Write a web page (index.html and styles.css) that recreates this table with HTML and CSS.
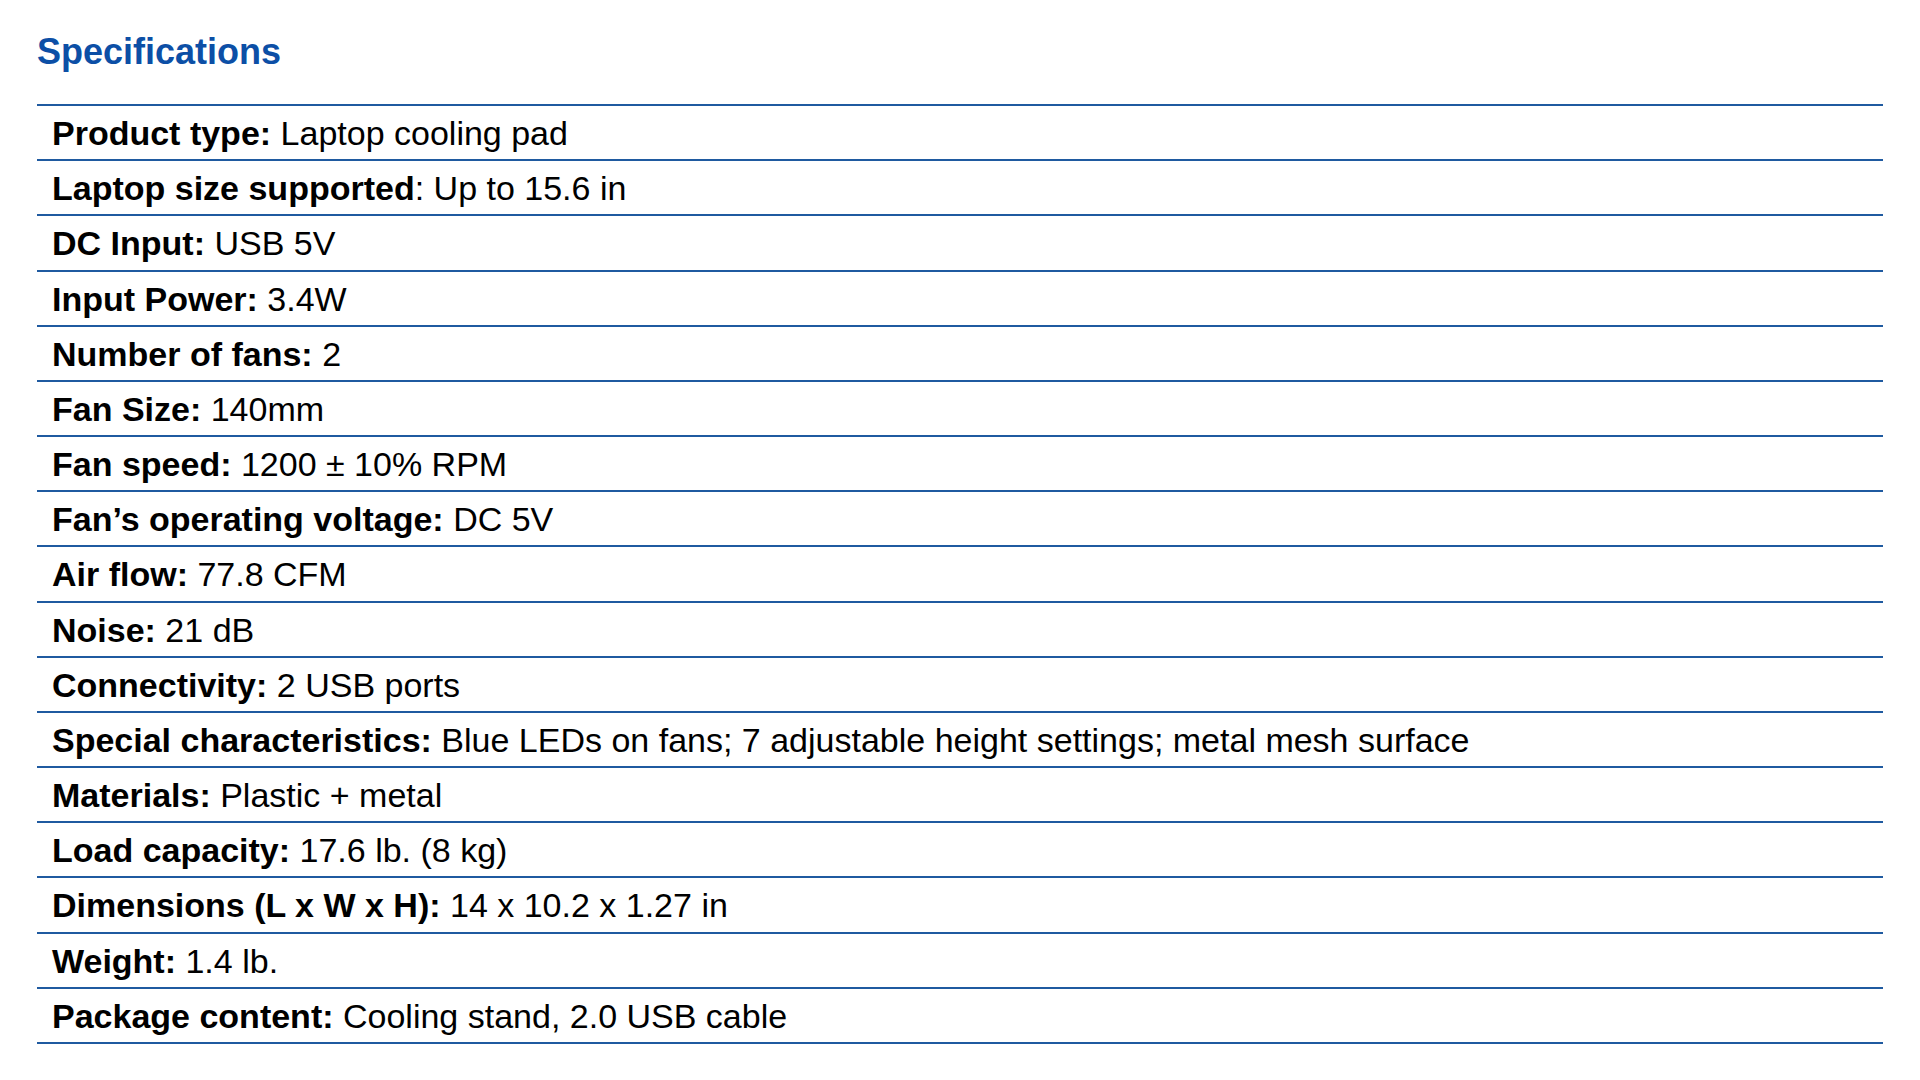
FILE: index.html
```html
<!DOCTYPE html>
<html lang="en">
<head>
<meta charset="utf-8">
<title>Specifications</title>
<link rel="stylesheet" href="styles.css">
</head>
<body>
<main class="page">
  <h2 class="title">Specifications</h2>
  <ul class="specs">
    <li class="row"><b>Product type:</b> Laptop cooling pad</li>
    <li class="row"><b>Laptop size supported</b>: Up to 15.6 in</li>
    <li class="row"><b>DC Input:</b> USB 5V</li>
    <li class="row"><b>Input Power:</b> 3.4W</li>
    <li class="row"><b>Number of fans:</b> 2</li>
    <li class="row"><b>Fan Size:</b> 140mm</li>
    <li class="row"><b>Fan speed:</b> 1200 ± 10% RPM</li>
    <li class="row"><b>Fan’s operating voltage:</b> DC 5V</li>
    <li class="row"><b>Air flow:</b> 77.8 CFM</li>
    <li class="row"><b>Noise:</b> 21 dB</li>
    <li class="row"><b>Connectivity:</b> 2 USB ports</li>
    <li class="row"><b>Special characteristics:</b> Blue LEDs on fans; 7 adjustable height settings; metal mesh surface</li>
    <li class="row"><b>Materials:</b> Plastic + metal</li>
    <li class="row"><b>Load capacity:</b> 17.6 lb. (8 kg)</li>
    <li class="row"><b>Dimensions (L x W x H):</b> 14 x 10.2 x 1.27 in</li>
    <li class="row"><b>Weight:</b> 1.4 lb.</li>
    <li class="row"><b>Package content:</b> Cooling stand, 2.0 USB cable</li>
  </ul>
</main>
</body>
</html>
```

FILE: styles.css
```css
html, body {
  margin: 0;
  padding: 0;
  background: #ffffff;
}

body {
  font-family: "Liberation Sans", Arial, sans-serif;
  color: #000000;
}

.page {
  padding: 30px 37px 0 37px;
}

.title {
  margin: 0 0 30px 0;
  font-size: 36px;
  line-height: 44px;
  font-weight: bold;
  color: #0c4fa6;
}

.specs {
  list-style: none;
  margin: 0;
  padding: 0;
  border-top: 2px solid #1f5aa0;
}

.row {
  box-sizing: content-box;
  padding: 2px 0 0 15px;
  height: 51.18px;
  line-height: 51px;
  font-size: 34px;
  border-bottom: 2px solid #1f5aa0;
  white-space: nowrap;
}

.row b {
  font-weight: bold;
}
```
